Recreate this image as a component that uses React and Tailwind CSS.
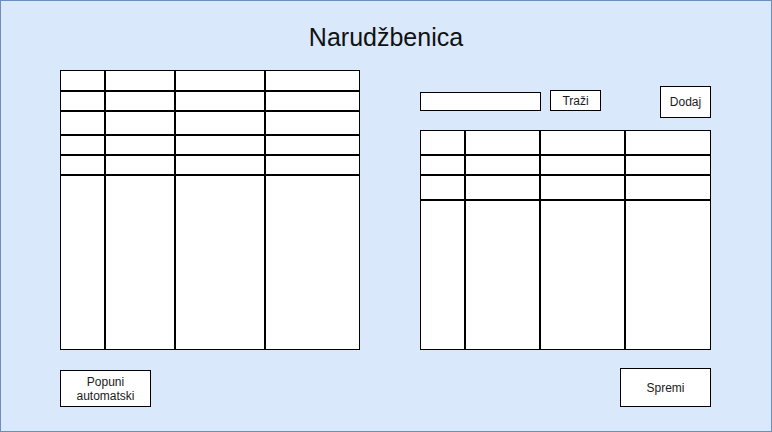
import React from "react";

const font = { fontFamily: '"Liberation Sans", Arial, sans-serif' };

// table drawn as a grid: outer 1px border, 2px inner lines
const Table = ({ cols, rows, className }) => {
  const cells = cols.length * rows.length;
  return (
    <div
      className={`grid border border-black bg-black gap-[2px] ${className}`}
      style={{ gridTemplateColumns: cols.join(" "), gridTemplateRows: rows.join(" ") }}
    >
      {Array.from({ length: cells }).map((_, i) => (
        <div key={i} className="bg-white" />
      ))}
    </div>
  );
};

const Box = ({ className, children }) => (
  <div
    className={`flex items-center justify-center border border-black bg-white text-center text-[12px] leading-[14px] text-[#1a1a1a] ${className}`}
  >
    {children}
  </div>
);

export default function App() {
  return (
    <div
      style={font}
      className="w-[772px] h-[432px] border border-[#6c8ebf] bg-[#dae8fc] flex flex-col"
    >
      <div className="h-[69px] pt-[22px] text-center text-[25px] leading-[28px] text-[#111]">
        Narudžbenica
      </div>

      <div className="flex pl-[59px] gap-[60px]">
        {/* left side */}
        <div className="flex flex-col w-[300px]">
          <Table
            className="h-[280px] w-[300px]"
            cols={["43px", "68px", "88px", "1fr"]}
            rows={["19px", "18px", "22px", "18px", "18px", "1fr"]}
          />
          <Box className="mt-[20px] w-[91px] h-[37px]">
            Popuni
            <br />
            automatski
          </Box>
        </div>

        {/* right side */}
        <div className="flex flex-col w-[291px]">
          <div className="flex items-start mt-[16px] h-[32px]">
            <div className="mt-[6px] w-[121px] h-[19px] border border-black bg-white" />
            <Box className="mt-[4px] ml-[9px] w-[51px] h-[21px]">Traži</Box>
            <Box className="ml-auto w-[51px] h-[32px]">Dodaj</Box>
          </div>
          <Table
            className="mt-[12px] h-[220px] w-[291px]"
            cols={["43px", "73px", "83px", "1fr"]}
            rows={["23px", "18px", "23px", "1fr"]}
          />
          <div className="flex justify-end mt-[18px]">
            <Box className="w-[91px] h-[39px]">Spremi</Box>
          </div>
        </div>
      </div>
    </div>
  );
}
